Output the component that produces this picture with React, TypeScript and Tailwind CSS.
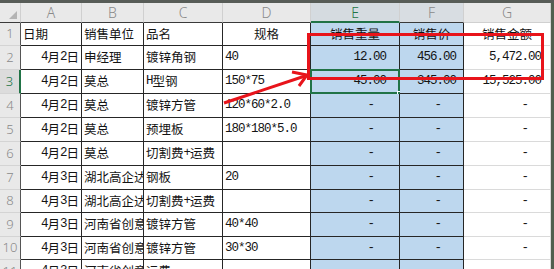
import React from 'react';
import clsx from 'clsx';

type Row = {
  n: number;
  h: string;
  cells: string[];
};

const COLS = ['A', 'B', 'C', 'D', 'E', 'F', 'G'];

const ROWS: Row[] = [
  { n: 1, h: 'h-[23px]', cells: ['日期', '销售单位', '品名', '规格', '销售重量', '销售价', '销售金额'] },
  { n: 2, h: 'h-[24px]', cells: ['4月2日', '申经理', '镀锌角钢', '40', '12.00', '456.00', '5,472.00'] },
  { n: 3, h: 'h-[24px]', cells: ['4月2日', '莫总', 'H型钢', '150*75', '45.00', '345.00', '15,525.00'] },
  { n: 4, h: 'h-[24px]', cells: ['4月2日', '莫总', '镀锌方管', '120*60*2.0', '-', '-', '-'] },
  { n: 5, h: 'h-[24px]', cells: ['4月2日', '莫总', '预埋板', '180*180*5.0', '-', '-', '-'] },
  { n: 6, h: 'h-[24px]', cells: ['4月2日', '莫总', '切割费+运费', '', '-', '-', '-'] },
  { n: 7, h: 'h-[24px]', cells: ['4月3日', '湖北高企达', '钢板', '20', '-', '-', '-'] },
  { n: 8, h: 'h-[23px]', cells: ['4月3日', '湖北高企达', '切割费+运费', '', '-', '-', '-'] },
  { n: 9, h: 'h-[24px]', cells: ['4月3日', '河南省创意', '镀锌方管', '40*40', '-', '-', '-'] },
  { n: 10, h: 'h-[23px]', cells: ['4月3日', '河南省创意', '镀锌方管', '30*30', '-', '-', '-'] },
  { n: 11, h: 'h-[24px]', cells: ['4月3日', '河南省创意', '运费', '', '-', '-', '-'] },
];

// ascii runs get the narrow mono face, the rest stays in the CJK face
const Txt: React.FC<{ s: string }> = ({ s }) => {
  const parts = s.split(/([\x20-\x7e]+)/).filter(Boolean);
  return (
    <>
      {parts.map((p, i) =>
        /^[\x20-\x7e]+$/.test(p) ? (
          <span key={i} className="font-['Liberation_Mono',monospace] text-[12.5px] tracking-[-1px]">
            {p}
          </span>
        ) : (
          <span key={i}>{p}</span>
        )
      )}
    </>
  );
};

// alignment + padding for a data cell
function align(row: number, col: number, value: string) {
  if (row === 1) return col < 3 ? 'justify-start pl-[2px]' : 'justify-center';
  if (col === 0) return 'justify-end pr-[2px]';
  if (col < 4) return 'justify-start pl-[2px]';
  if (value === '-') {
    if (col === 4) return 'justify-end pr-[25px]';
    return 'justify-end pr-[22px]';
  }
  if (col === 4) return 'justify-end pr-[13px]';
  if (col === 5) return 'justify-end pr-[7px]';
  return 'justify-end pr-[9px]';
}

export default function App() {
  return (
    <div className="relative h-[269px] w-[554px] overflow-hidden bg-white font-['Noto_Sans_CJK_SC',sans-serif] text-[12.5px] text-[#141414]">
      <div className="h-[3px] bg-[#575c57]" />
      <div className="flex">
        <div className="grid w-[551px] grid-cols-[21px_61px_62px_79px_88px_89px_64px_87px]">
          {/* corner */}
          <div className="relative h-[20px] border-b border-r border-b-[#3a3a3a] border-r-[#d0d0d0] bg-[#e9e9e9]">
            <svg className="absolute bottom-[3px] right-[3px]" width="8" height="8" viewBox="0 0 8 8">
              <polygon points="8,0 8,8 0,8" fill="#b4b4b4" />
            </svg>
          </div>
          {COLS.map((c, i) => (
            <div
              key={c}
              className={clsx(
                "flex h-[20px] items-center justify-center border-b border-r border-r-[#d0d0d0] font-['Noto_Sans',sans-serif] text-[14px] font-light",
                i === 4
                  ? 'border-b-2 border-b-[#217346] bg-[#d5dbe0] text-[#217346]'
                  : i === 5
                    ? 'border-b-[#3a3a3a] bg-[#d8dde2] text-[#8a8a8a]'
                    : i === 6
                      ? 'border-b-[#d0d0d0] bg-[#e9e9e9] text-[#8a8a8a]'
                      : 'border-b-[#3a3a3a] bg-[#e9e9e9] text-[#8a8a8a]'
              )}
            >
              {c}
            </div>
          ))}

          {ROWS.map((r) => (
            <React.Fragment key={r.n}>
              <div
                className={clsx(
                  "flex items-center justify-center border-b border-r border-b-[#d4d4d4] font-['Noto_Sans',sans-serif] text-[13px] font-light",
                  r.h,
                  r.n === 3
                    ? 'border-r-2 border-r-[#217346] bg-[#dcdcdc] text-[#217346]'
                    : 'border-r-[#555555] bg-[#e9e9e9] text-[#8a8a8a]'
                )}
              >
                {r.n}
              </div>
              {r.cells.map((v, ci) => {
                const active = r.n === 3 && ci === 4;
                return (
                  <div
                    key={ci}
                    className={clsx(
                      'relative border-b border-r',
                      r.h,
                      ci === 6 ? 'border-[#dadada] bg-white' : 'border-[#262626]',
                      (ci === 4 || ci === 5) && 'bg-[#bdd7ee]'
                    )}
                  >
                    <div className={clsx('flex h-full w-full items-center overflow-hidden whitespace-nowrap', align(r.n, ci, v))}>
                      <Txt s={v} />
                    </div>
                    {active && (
                      <>
                        <div className="absolute -bottom-px -left-px -right-px -top-px border-2 border-[#217346]" />
                        <div className="absolute -bottom-[4px] -right-[4px] h-[6px] w-[6px] border border-white bg-[#217346]" />
                      </>
                    )}
                  </div>
                );
              })}
            </React.Fragment>
          ))}
        </div>
        <div className="w-[3px] bg-[#51604f]" />
      </div>

      {/* annotation: red box */}
      <div className="absolute left-[307px] top-[33px] h-[47px] w-[237px] border-[3px] border-[#e8141b]" />

      {/* annotation: arrow */}
      <svg className="absolute left-0 top-0" width="554" height="269" viewBox="0 0 554 269">
        <line x1="224" y1="103" x2="305" y2="76" stroke="#e8141b" strokeWidth="3" />
        <polyline points="292,72 307,75 299,86" fill="none" stroke="#e8141b" strokeWidth="3" strokeLinejoin="miter" />
      </svg>
    </div>
  );
}
